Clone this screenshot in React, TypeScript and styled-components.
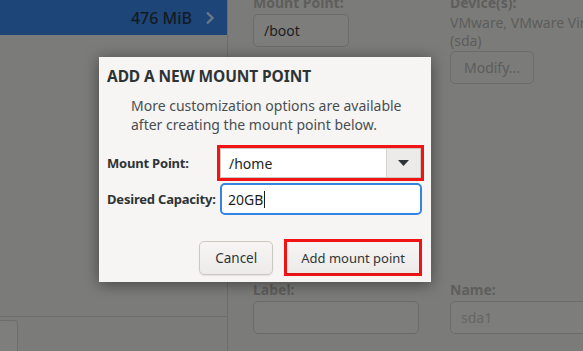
import React from "react";
import styled, { createGlobalStyle } from "styled-components";

const GlobalStyle = createGlobalStyle`
  html, body {
    margin: 0;
    padding: 0;
    background: #7b7b79;
    font-family: "Noto Sans", "Open Sans", sans-serif;
  }
`;

const Screen = styled.div`
  position: relative;
  width: 583px;
  height: 351px;
  overflow: hidden;
  display: grid;
  grid-template-columns: 228px 1fr;
  background: #7b7b79;
`;

const LeftPane = styled.div`
  display: flex;
  flex-direction: column;
  border-right: 1px solid #6d6d6b;
`;

const SelectedRow = styled.div`
  height: 35px;
  background: #1d4577;
  display: flex;
  align-items: center;
  justify-content: flex-end;
  gap: 13px;
  padding-right: 12px;
  font-size: 16px;
  font-weight: 500;
  color: #141a22;
`;

const Chevron = styled.svg`
  width: 10px;
  height: 14px;
`;

const Filler = styled.div`
  flex: 1;
`;

const BottomBar = styled.div`
  height: 34px;
  border-top: 1px solid #6d6d6b;
  display: flex;
  align-items: flex-end;
`;

const SmallButton = styled.div`
  width: 17px;
  height: 30px;
  border: 1px solid #6d6d6b;
  border-left: none;
  border-bottom: none;
  border-radius: 0 4px 0 0;
  background: #7e7e7c;
`;

const RightPane = styled.div`
  display: flex;
  flex-direction: column;
  justify-content: space-between;
  padding: 0 0 17px 25px;
`;

const FieldGrid = styled.div`
  display: grid;
  grid-template-columns: 166px 1fr;
  column-gap: 31px;
  margin-top: -6px;
`;

const Column = styled.div`
  display: flex;
  flex-direction: column;
  gap: 3px;
`;

const FieldLabel = styled.div`
  font-size: 14px;
  font-weight: 700;
  color: #5e5e5c;
  line-height: 17px;
`;

const GhostInput = styled.div<{ $width?: number }>`
  box-sizing: border-box;
  width: ${(p) => (p.$width ? `${p.$width}px` : "auto")};
  height: 33px;
  border: 1px solid #6b6b69;
  border-radius: 5px;
  background: #7d7d7b;
  padding: 0 10px;
  display: flex;
  align-items: center;
  font-size: 14px;
  color: ${(p) => (p.$width ? "#1e1e1e" : "#666664")};
`;

const DeviceText = styled.div`
  font-size: 14px;
  line-height: 18px;
  color: #5d5d5b;
  white-space: nowrap;
  margin-bottom: -2px;
`;

const GhostButton = styled.div`
  box-sizing: border-box;
  width: 84px;
  height: 33px;
  border: 1px solid #6b6b69;
  border-radius: 5px;
  display: flex;
  align-items: center;
  justify-content: center;
  font-size: 14px;
  color: #5d5d5b;
`;

const Dialog = styled.div`
  position: absolute;
  left: 99px;
  top: 57px;
  width: 332px;
  height: 225px;
  box-sizing: border-box;
  background: #f6f5f4;
  box-shadow: 0 2px 14px rgba(0, 0, 0, 0.45);
  padding: 9px 9px 0 8px;
  display: flex;
  flex-direction: column;
  color: #2e3436;
`;

const Title = styled.h2`
  margin: 0;
  font-size: 15.5px;
  font-weight: 700;
  line-height: 20px;
  letter-spacing: -0.1px;
  color: #2e3436;
`;

const Description = styled.p`
  margin: 10px 0 0 24px;
  font-size: 14px;
  line-height: 19px;
  color: #4a4e50;
`;

const Form = styled.div`
  margin-top: 11px;
  display: grid;
  grid-template-columns: 110px 207px;
  row-gap: 2px;
  align-items: center;
`;

const FormLabel = styled.label`
  font-size: 13px;
  font-weight: 700;
  letter-spacing: -0.2px;
  white-space: nowrap;
  color: #2e3436;
`;

const Marker = styled.div`
  box-sizing: border-box;
  border: 3px solid #f01414;
  background: #ffffff;
`;

const Combo = styled.div`
  box-sizing: border-box;
  height: 30px;
  display: flex;
  border: 1px solid #cdc7c2;
  background: #ffffff;
`;

const ComboText = styled.div`
  flex: 1;
  display: flex;
  align-items: center;
  padding-left: 8px;
  font-size: 14px;
  color: #1e1e1e;
`;

const ComboButton = styled.div`
  width: 33px;
  border-left: 1px solid #d6d2ce;
  background: #ecebe9;
  display: flex;
  align-items: center;
  justify-content: center;
`;

const Caret = styled.svg`
  width: 11px;
  height: 6px;
`;

const TextInput = styled.div`
  box-sizing: border-box;
  height: 32px;
  margin: 0 2px 0 3px;
  border: 2px solid #3584e4;
  border-radius: 5px;
  background: #ffffff;
  display: flex;
  align-items: center;
  padding-left: 6px;
  font-size: 14px;
  color: #1e1e1e;
`;

const Cursor = styled.span`
  display: inline-block;
  width: 1px;
  height: 17px;
  background: #1e1e1e;
  margin-left: 1px;
`;

const Actions = styled.div`
  margin-top: auto;
  margin-bottom: 6px;
  display: flex;
  justify-content: flex-end;
  align-items: center;
  gap: 11px;
`;

const Button = styled.button`
  box-sizing: border-box;
  height: 34px;
  padding: 0 15px;
  border: 1px solid #cdc7c2;
  border-radius: 5px;
  background: linear-gradient(#f6f5f4, #edebe9);
  box-shadow: 0 1px 1px rgba(0, 0, 0, 0.08);
  font-family: inherit;
  font-size: 13.5px;
  color: #2e3436;
`;

const MarkedButton = styled(Button)`
  border-radius: 0;
  border: none;
  height: 31px;
  padding: 0 14px;
  font-size: 13px;
`;

export default function App() {
  return (
    <>
      <GlobalStyle />
      <Screen>
        <LeftPane>
          <SelectedRow>
            476 MiB
            <Chevron viewBox="0 0 10 14">
              <path d="M2 1.5 L7.5 7 L2 12.5" fill="none" stroke="#6a7789" strokeWidth="2.4" />
            </Chevron>
          </SelectedRow>
          <Filler />
          <BottomBar>
            <SmallButton />
          </BottomBar>
        </LeftPane>
        <RightPane>
          <FieldGrid>
            <Column>
              <FieldLabel>Mount Point:</FieldLabel>
              <GhostInput $width={96}>/boot</GhostInput>
            </Column>
            <Column>
              <FieldLabel>Device(s):</FieldLabel>
              <DeviceText>
                VMware, VMware Virtual S
                <br />
                (sda)
              </DeviceText>
              <GhostButton>Modify...</GhostButton>
            </Column>
          </FieldGrid>
          <FieldGrid>
            <Column>
              <FieldLabel>Label:</FieldLabel>
              <GhostInput />
            </Column>
            <Column>
              <FieldLabel>Name:</FieldLabel>
              <GhostInput>sda1</GhostInput>
            </Column>
          </FieldGrid>
        </RightPane>

        <Dialog>
          <Title>ADD A NEW MOUNT POINT</Title>
          <Description>
            More customization options are available
            <br />
            after creating the mount point below.
          </Description>
          <Form>
            <FormLabel>Mount Point:</FormLabel>
            <Marker>
              <Combo>
                <ComboText>/home</ComboText>
                <ComboButton>
                  <Caret viewBox="0 0 11 6">
                    <path d="M0 0 H11 L5.5 6 Z" fill="#2e3436" />
                  </Caret>
                </ComboButton>
              </Combo>
            </Marker>
            <FormLabel>Desired Capacity:</FormLabel>
            <TextInput>
              20GB
              <Cursor />
            </TextInput>
          </Form>
          <Actions>
            <Button>Cancel</Button>
            <Marker>
              <MarkedButton>Add mount point</MarkedButton>
            </Marker>
          </Actions>
        </Dialog>
      </Screen>
    </>
  );
}
